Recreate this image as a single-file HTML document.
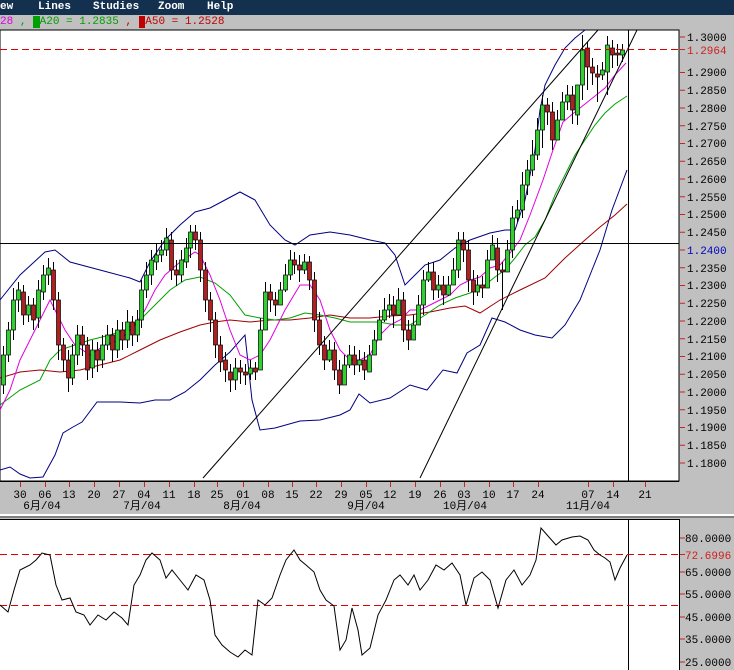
<!DOCTYPE html>
<html><head><meta charset="utf-8"><style>
body{margin:0;width:734px;height:670px;overflow:hidden;background:#c0c0c0;font-family:"Liberation Mono","Noto Sans CJK SC",monospace;}
#menu{position:absolute;left:0;top:0;width:734px;height:15px;background:#14304f;color:#fff;font-size:11px;font-weight:bold;}
#menu span{position:absolute;top:1px;}
#leg{position:absolute;left:0;top:15px;width:734px;height:15px;background:#c0c0c0;font-size:11px;line-height:15px;}
svg{position:absolute;left:0;top:0;}
.g{fill:#30d030;stroke:#000;stroke-width:.7}.r{fill:#b02020;stroke:#000;stroke-width:.7}
</style></head><body>
<div id="menu"><span style="left:0">ew</span><span style="left:38px">Lines</span><span style="left:93px">Studies</span><span style="left:158px">Zoom</span><span style="left:207px">Help</span></div>
<div id="leg"><span style="color:#e000e0">28</span> <span style="color:#00a000">, </span><span style="color:#00a000"><b style="background:#00a000;color:#00a000">M</b>A20 = 1.2835 </span><span style="color:#c00000">, <b style="background:#c00000;color:#c00000">M</b>A50 = 1.2528</span></div>
<svg width="734" height="670" xmlns="http://www.w3.org/2000/svg" font-family="Liberation Mono, Noto Sans CJK SC, monospace" font-size="11">
<rect x="0" y="30" width="679" height="451" fill="#fff" stroke="#000"/>
<rect x="0" y="481" width="679" height="1" fill="#000"/>
<rect x="0" y="514" width="734" height="2" fill="#fff"/>
<rect x="0" y="516" width="734" height="2" fill="#808080"/>
<rect x="0" y="519" width="679" height="151" fill="#fff"/>
<line x1="679.5" y1="519" x2="679.5" y2="670" stroke="#000"/>
<line x1="0" y1="519.5" x2="679" y2="519.5" stroke="#000"/>
<g fill="none" stroke-width="1">
<polyline stroke="#000080" points="0,300 20,275 45,252 55,250 70,262 100,270 130,278 140,282 150,262 165,240 180,225 195,212 210,208 225,200 240,192 255,200 270,225 285,240 295,245 310,235 330,232 350,235 370,240 385,243 395,255 405,285 415,275 425,265 440,260 455,248 470,240 490,233 505,230 515,230 525,200 535,150 540,110 545,85 555,65 565,48 575,38 585,30"/>
<polyline stroke="#000080" points="0,470 10,467 20,474 30,478 43,477 55,455 63,433 73,427 82,422 97,402 120,402 140,403 155,400 170,400 185,392 200,380 215,365 230,352 245,335 252,400 260,430 275,428 300,421 320,420 340,415 350,410 359,394 370,403 390,398 410,385 427,390 443,370 457,373 467,353 480,345 492,318 505,322 520,330 535,335 552,338 565,325 580,300 592,270 600,250 612,210 627,170"/>
<polyline stroke="#a00000" points="0,378 20,372 40,370 60,372 80,370 100,365 120,360 140,350 160,340 180,332 200,325 215,322 230,320 250,322 270,320 290,320 310,318 330,315 350,318 370,318 390,316 410,315 430,312 450,308 465,306 480,313 500,300 520,290 545,278 565,258 585,240 600,227 615,215 627,204"/>
<polyline stroke="#00a000" points="0,405 20,390 40,380 50,360 60,350 75,345 90,340 110,335 125,330 140,320 155,305 170,290 185,280 200,277 215,283 230,295 245,315 260,318 275,320 290,318 305,313 320,315 335,318 350,322 365,322 380,322 395,325 410,325 425,315 440,305 455,298 470,293 485,285 495,277 505,270 515,258 525,245 535,237 545,220 555,195 565,175 575,155 585,140 595,125 605,113 615,104 627,96"/>
<polyline stroke="#e000e0" points="0,410 10,390 20,360 30,340 40,320 50,300 55,310 65,330 75,345 90,355 105,345 120,340 135,325 145,310 155,290 165,275 180,262 195,252 200,255 210,275 220,300 230,330 240,355 250,360 260,355 270,340 285,310 300,285 310,285 320,300 330,330 340,350 350,360 360,360 370,355 380,335 390,325 400,320 410,310 420,310 430,305 440,300 450,295 460,285 470,280 480,277 490,268 500,265 510,253 520,240 530,215 543,180 553,150 563,122 575,112 590,100 605,88 615,75 626,63"/>
</g>
<path stroke="#000" fill="none" d="M3.5 346V394M8.5 322V362M13.5 288V340M18.5 282V312M23.5 285V325M28.5 296V322M33.5 298V330M38.5 280V328M43.5 265V300M48.5 258V285M53.5 262V310M58.5 292V360M63.5 338V372M68.5 350V392M72.5 344V385M77.5 325V365M82.5 326V356M87.5 337V380M92.5 340V378M97.5 342V372M102.5 335V368M107.5 325V350M112.5 328V362M117.5 320V358M122.5 322V350M127.5 310V348M132.5 316V346M137.5 310V342M141.5 280V328M146.5 262V298M151.5 250V285M156.5 244V270M161.5 240V262M166.5 228V256M171.5 232V280M176.5 260V286M181.5 250V282M186.5 238V268M190.5 225V258M195.5 225V250M200.5 232V282M205.5 262V312M210.5 292V332M215.5 312V358M220.5 336V372M225.5 352V382M230.5 364V392M235.5 358V390M240.5 360V384M245.5 364V385M250.5 360V380M255.5 362V380M260.5 318V340M265.5 282V308M270.5 284V312M275.5 292V316M280.5 282V302M285.5 264V292M290.5 250V280M294.5 252V274M299.5 255V282M304.5 254V274M309.5 256V290M314.5 272V332M319.5 312V355M324.5 336V370M329.5 340V362M334.5 342V380M339.5 360V394M344.5 355V380M349.5 345V368M354.5 346V375M359.5 350V372M364.5 352V380M369.5 345V368M374.5 330V352M379.5 310V332M384.5 298V322M389.5 294V318M393.5 296V328M398.5 288V312M403.5 292V342M408.5 320V350M413.5 315V338M418.5 295V318M423.5 270V315M428.5 262V282M433.5 262V300M438.5 275V298M443.5 276V305M448.5 276V296M453.5 258V282M458.5 232V278M463.5 232V262M468.5 240V292M473.5 270V305M477.5 275V296M482.5 276V298M487.5 250V272M492.5 235V258M497.5 238V282M502.5 262V310M507.5 240V262M512.5 206V258M517.5 200V222M522.5 172V218M527.5 160V195M532.5 140V176M537.5 118V160M542.5 95V148M547.5 98V125M552.5 102V150M557.5 110V135M562.5 92V112M567.5 85V110M572.5 86V124M577.5 98V125M582.5 35V100M587.5 42V90M592.5 58V85M597.5 65V102M602.5 62V80M607.5 36V95M612.5 40V68M617.5 44V66M622.5 44V62"/>
<rect class="g" x="1.5" y="355" width="4" height="30"/><rect class="g" x="6.5" y="330" width="4" height="25"/><rect class="g" x="11.5" y="300" width="4" height="30"/><rect class="g" x="16.5" y="290" width="4" height="10"/><rect class="r" x="21.5" y="292" width="4" height="23"/><rect class="g" x="26.5" y="305" width="4" height="10"/><rect class="r" x="31.5" y="305" width="4" height="15"/><rect class="g" x="36.5" y="290" width="4" height="28"/><rect class="g" x="41.5" y="275" width="4" height="17"/><rect class="g" x="46.5" y="268" width="4" height="7"/><rect class="r" x="51.5" y="270" width="4" height="30"/><rect class="r" x="56.5" y="300" width="4" height="45"/><rect class="r" x="61.5" y="345" width="4" height="15"/><rect class="r" x="66.5" y="360" width="4" height="18"/><rect class="g" x="70.5" y="355" width="4" height="23"/><rect class="g" x="75.5" y="335" width="4" height="20"/><rect class="r" x="80.5" y="335" width="4" height="10"/><rect class="r" x="85.5" y="345" width="4" height="25"/><rect class="g" x="90.5" y="350" width="4" height="18"/><rect class="r" x="95.5" y="350" width="4" height="10"/><rect class="g" x="100.5" y="345" width="4" height="15"/><rect class="g" x="105.5" y="335" width="4" height="10"/><rect class="r" x="110.5" y="335" width="4" height="15"/><rect class="g" x="115.5" y="330" width="4" height="20"/><rect class="r" x="120.5" y="330" width="4" height="10"/><rect class="g" x="125.5" y="322" width="4" height="18"/><rect class="r" x="130.5" y="322" width="4" height="13"/><rect class="g" x="135.5" y="320" width="4" height="15"/><rect class="g" x="139.5" y="290" width="4" height="30"/><rect class="g" x="144.5" y="275" width="4" height="15"/><rect class="g" x="149.5" y="260" width="4" height="15"/><rect class="g" x="154.5" y="255" width="4" height="7"/><rect class="g" x="159.5" y="250" width="4" height="5"/><rect class="g" x="164.5" y="238" width="4" height="12"/><rect class="r" x="169.5" y="240" width="4" height="30"/><rect class="r" x="174.5" y="270" width="4" height="5"/><rect class="g" x="179.5" y="260" width="4" height="15"/><rect class="g" x="184.5" y="248" width="4" height="14"/><rect class="g" x="188.5" y="232" width="4" height="16"/><rect class="r" x="193.5" y="232" width="4" height="8"/><rect class="r" x="198.5" y="240" width="4" height="30"/><rect class="r" x="203.5" y="270" width="4" height="30"/><rect class="r" x="208.5" y="300" width="4" height="20"/><rect class="r" x="213.5" y="320" width="4" height="25"/><rect class="r" x="218.5" y="345" width="4" height="17"/><rect class="r" x="223.5" y="360" width="4" height="10"/><rect class="r" x="228.5" y="372" width="4" height="8"/><rect class="g" x="233.5" y="368" width="4" height="12"/><rect class="r" x="238.5" y="368" width="4" height="4"/><rect class="r" x="243.5" y="372" width="4" height="3"/><rect class="g" x="248.5" y="368" width="4" height="6"/><rect class="r" x="253.5" y="368" width="4" height="4"/><rect class="g" x="258.5" y="330" width="4" height="40"/><rect class="g" x="263.5" y="292" width="4" height="38"/><rect class="r" x="268.5" y="292" width="4" height="8"/><rect class="r" x="273.5" y="300" width="4" height="5"/><rect class="g" x="278.5" y="290" width="4" height="15"/><rect class="g" x="283.5" y="275" width="4" height="15"/><rect class="g" x="288.5" y="260" width="4" height="15"/><rect class="r" x="292.5" y="260" width="4" height="5"/><rect class="r" x="297.5" y="265" width="4" height="5"/><rect class="g" x="302.5" y="262" width="4" height="8"/><rect class="r" x="307.5" y="262" width="4" height="18"/><rect class="r" x="312.5" y="280" width="4" height="40"/><rect class="r" x="317.5" y="320" width="4" height="25"/><rect class="r" x="322.5" y="345" width="4" height="15"/><rect class="g" x="327.5" y="350" width="4" height="10"/><rect class="r" x="332.5" y="350" width="4" height="20"/><rect class="r" x="337.5" y="370" width="4" height="15"/><rect class="g" x="342.5" y="365" width="4" height="20"/><rect class="g" x="347.5" y="355" width="4" height="10"/><rect class="r" x="352.5" y="355" width="4" height="10"/><rect class="g" x="357.5" y="360" width="4" height="5"/><rect class="r" x="362.5" y="360" width="4" height="10"/><rect class="g" x="367.5" y="355" width="4" height="17"/><rect class="g" x="372.5" y="340" width="4" height="15"/><rect class="g" x="377.5" y="320" width="4" height="20"/><rect class="g" x="382.5" y="310" width="4" height="10"/><rect class="g" x="387.5" y="305" width="4" height="5"/><rect class="r" x="391.5" y="305" width="4" height="10"/><rect class="g" x="396.5" y="300" width="4" height="15"/><rect class="r" x="401.5" y="300" width="4" height="30"/><rect class="r" x="406.5" y="330" width="4" height="10"/><rect class="g" x="411.5" y="325" width="4" height="15"/><rect class="g" x="416.5" y="305" width="4" height="20"/><rect class="g" x="421.5" y="280" width="4" height="25"/><rect class="g" x="426.5" y="272" width="4" height="8"/><rect class="r" x="431.5" y="272" width="4" height="18"/><rect class="g" x="436.5" y="285" width="4" height="5"/><rect class="r" x="441.5" y="285" width="4" height="10"/><rect class="g" x="446.5" y="285" width="4" height="10"/><rect class="g" x="451.5" y="270" width="4" height="15"/><rect class="g" x="456.5" y="240" width="4" height="30"/><rect class="r" x="461.5" y="240" width="4" height="10"/><rect class="r" x="466.5" y="250" width="4" height="30"/><rect class="r" x="471.5" y="280" width="4" height="12"/><rect class="g" x="475.5" y="285" width="4" height="7"/><rect class="r" x="480.5" y="285" width="4" height="3"/><rect class="g" x="485.5" y="260" width="4" height="28"/><rect class="g" x="490.5" y="245" width="4" height="15"/><rect class="r" x="495.5" y="248" width="4" height="22"/><rect class="r" x="500.5" y="270" width="4" height="2"/><rect class="g" x="505.5" y="250" width="4" height="22"/><rect class="g" x="510.5" y="218" width="4" height="32"/><rect class="g" x="515.5" y="210" width="4" height="8"/><rect class="g" x="520.5" y="185" width="4" height="25"/><rect class="g" x="525.5" y="170" width="4" height="15"/><rect class="g" x="530.5" y="155" width="4" height="15"/><rect class="g" x="535.5" y="130" width="4" height="25"/><rect class="g" x="540.5" y="105" width="4" height="25"/><rect class="r" x="545.5" y="105" width="4" height="7"/><rect class="r" x="550.5" y="112" width="4" height="28"/><rect class="g" x="555.5" y="120" width="4" height="20"/><rect class="g" x="560.5" y="102" width="4" height="18"/><rect class="g" x="565.5" y="95" width="4" height="7"/><rect class="r" x="570.5" y="95" width="4" height="15"/><rect class="g" x="575.5" y="85" width="4" height="30"/><rect class="g" x="580.5" y="50" width="4" height="35"/><rect class="r" x="585.5" y="48" width="4" height="19"/><rect class="r" x="590.5" y="67" width="4" height="6"/><rect class="r" x="595.5" y="74" width="4" height="3"/><rect class="g" x="600.5" y="70" width="4" height="5"/><rect class="g" x="605.5" y="45" width="4" height="27"/><rect class="r" x="610.5" y="48" width="4" height="7"/><rect class="r" x="615.5" y="53" width="4" height="2"/><rect class="g" x="620.5" y="50" width="4" height="5"/>
<line x1="203" y1="478" x2="598" y2="30" stroke="#000"/>
<line x1="420" y1="478" x2="637" y2="30" stroke="#000"/>
<line x1="0" y1="243.5" x2="679" y2="243.5" stroke="#000"/>
<line x1="0" y1="49.5" x2="679" y2="49.5" stroke="#e00000" stroke-dasharray="7,4"/>
<line x1="628.5" y1="30" x2="628.5" y2="481" stroke="#000"/>
<line x1="628.5" y1="519" x2="628.5" y2="670" stroke="#000"/>
<path stroke="#d02020" d="M680 37H685M680 49.5H685M680 72.5H685M680 90.3H685M680 108H685M680 125.8H685M680 143.5H685M680 161.3H685M680 179H685M680 196.8H685M680 214.5H685M680 232.3H685M680 250H685M680 267.8H685M680 285.5H685M680 303.3H685M680 321H685M680 338.8H685M680 356.5H685M680 374.3H685M680 392H685M680 409.8H685M680 427.5H685M680 445.3H685M680 463H685"/>
<g>
<text x="687" y="41">1.3000</text><text x="687" y="54" fill="#d02020">1.2964</text><text x="687" y="76">1.2900</text><text x="687" y="94">1.2850</text><text x="687" y="112">1.2800</text><text x="687" y="130">1.2750</text><text x="687" y="147">1.2700</text><text x="687" y="165">1.2650</text><text x="687" y="183">1.2600</text><text x="687" y="201">1.2550</text><text x="687" y="218">1.2500</text><text x="687" y="236">1.2450</text><text x="687" y="254" fill="#0000c0">1.2400</text><text x="687" y="272">1.2350</text><text x="687" y="289">1.2300</text><text x="687" y="307">1.2250</text><text x="687" y="325">1.2200</text><text x="687" y="343">1.2150</text><text x="687" y="360">1.2100</text><text x="687" y="378">1.2050</text><text x="687" y="396">1.2000</text><text x="687" y="414">1.1950</text><text x="687" y="431">1.1900</text><text x="687" y="449">1.1850</text><text x="687" y="467">1.1800</text>
</g>
<path stroke="#d02020" d="M20.5 482V487M45.5 482V487M69.5 482V487M94.5 482V487M119.5 482V487M144.5 482V487M169.5 482V487M194.5 482V487M217.5 482V487M243.5 482V487M268.5 482V487M292.5 482V487M316.5 482V487M341.5 482V487M366.5 482V487M390.5 482V487M415.5 482V487M440.5 482V487M464.5 482V487M489.5 482V487M513.5 482V487M538.5 482V487M588.5 482V487M613.5 482V487M645.5 482V487"/>
<g text-anchor="middle">
<text x="20" y="498">30</text><text x="45" y="498">06</text><text x="69" y="498">13</text><text x="94" y="498">20</text><text x="119" y="498">27</text><text x="144" y="498">04</text><text x="169" y="498">11</text><text x="194" y="498">18</text><text x="217" y="498">25</text><text x="243" y="498">01</text><text x="268" y="498">08</text><text x="292" y="498">15</text><text x="316" y="498">22</text><text x="341" y="498">29</text><text x="366" y="498">05</text><text x="390" y="498">12</text><text x="415" y="498">19</text><text x="440" y="498">26</text><text x="464" y="498">03</text><text x="489" y="498">10</text><text x="513" y="498">17</text><text x="538" y="498">24</text><text x="588" y="498">07</text><text x="613" y="498">14</text><text x="645" y="498">21</text>
<text x="42" y="509">6月/04</text><text x="142" y="509">7月/04</text><text x="242" y="509">8月/04</text><text x="366" y="509">9月/04</text><text x="465" y="509">10月/04</text><text x="588" y="509">11月/04</text>
</g>
<line x1="0" y1="554.5" x2="679" y2="554.5" stroke="#e00000" stroke-dasharray="7,4"/>
<line x1="0" y1="605.5" x2="679" y2="605.5" stroke="#e00000" stroke-dasharray="7,4"/>
<path stroke="#d02020" d="M680 538H685M680 554.5H685M680 572H685M680 594H685M680 617H685M680 639H685M680 662H685"/>
<text x="685" y="542">80.0000</text><text x="685" y="559" fill="#d02020">72.6996</text><text x="685" y="576">65.0000</text><text x="685" y="598">55.0000</text><text x="685" y="621">45.0000</text><text x="685" y="643">35.0000</text><text x="685" y="666">25.0000</text>
<polyline fill="none" stroke="#000" points="0,605 8,612 14,590 20,570 30,565 36,560 42,553 50,555 56,585 62,600 70,598 76,612 84,615 90,625 98,615 106,620 114,612 122,618 128,625 134,585 140,575 146,560 152,553 160,560 166,578 172,570 180,580 188,590 196,575 204,580 210,600 215,635 222,645 230,652 238,657 245,650 252,655 258,600 265,605 272,598 280,575 286,560 294,550 300,560 306,565 314,572 320,590 326,600 334,606 340,650 346,640 352,608 358,630 362,655 370,648 378,615 386,600 394,580 400,575 408,585 414,575 420,590 428,580 436,565 444,570 452,563 460,575 466,605 474,578 482,572 490,580 498,608 506,580 514,570 522,585 530,575 536,560 541,528 548,536 556,545 562,540 572,537 580,536 588,540 594,550 600,555 605,558 610,562 615,580 620,568 627,555"/>
</svg>
</body></html>
